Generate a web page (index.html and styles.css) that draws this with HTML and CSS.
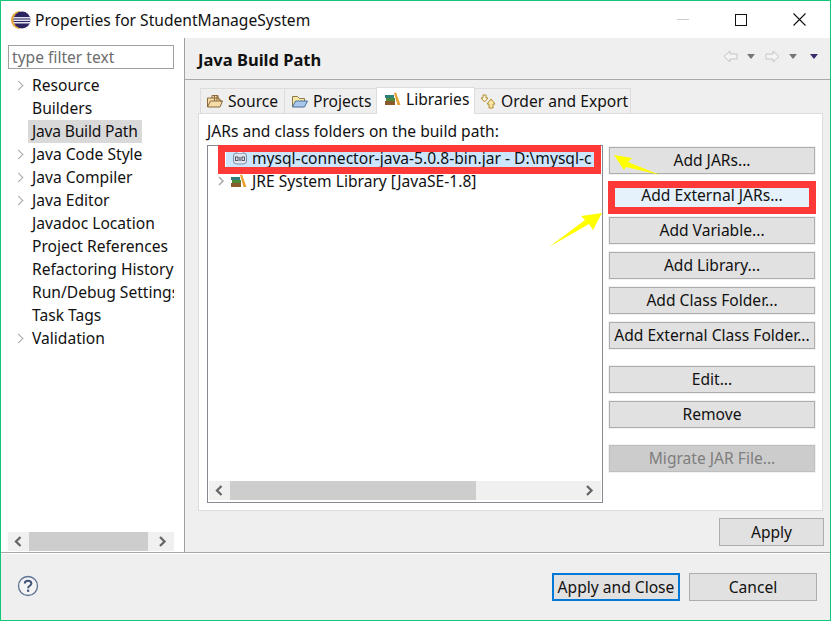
FILE: index.html
```html
<!DOCTYPE html>
<html lang="en">
<head>
  <meta charset="UTF-8" />
  <title>Properties for StudentManageSystem</title>
  <link rel="stylesheet" href="styles.css">
</head>
<body>
  <div class="window">
    <div class="titlebar">
      <svg class="app-icon" width="20" height="20" viewBox="0 0 20 20">
        <path d="M9 1 A9 9 0 0 0 9 19 Z" fill="#e8a23c"/>
        <circle cx="11" cy="10" r="8.500" fill="#2c2562"/>
        <rect x="2.500" y="7" width="17" height="1.500" fill="#e4e4f0"/>
        <rect x="2.500" y="9.500" width="17" height="1.500" fill="#e4e4f0"/>
        <rect x="2.500" y="12" width="17" height="1.500" fill="#e4e4f0"/>
      </svg>
      <span class="title">Properties for StudentManageSystem</span>
      <div class="winbtns">
        <span class="win-min"></span>
        <span class="win-max"></span>
        <svg class="win-close" width="13" height="13" viewBox="0 0 13 13"><path d="M0.500 0.500 L12.500 12.500 M12.500 0.500 L0.500 12.500" stroke="#111" stroke-width="1.100"/></svg>
      </div>
    </div>

    <div class="main">
      <aside class="sidebar">
        <div class="filter">type filter text</div>
        <ul class="nav">
          <li class="arrow">Resource</li>
          <li>Builders</li>
          <li class="current"><span>Java Build Path</span></li>
          <li class="arrow">Java Code Style</li>
          <li class="arrow">Java Compiler</li>
          <li class="arrow">Java Editor</li>
          <li>Javadoc Location</li>
          <li>Project References</li>
          <li>Refactoring History</li>
          <li>Run/Debug Settings</li>
          <li>Task Tags</li>
          <li class="arrow">Validation</li>
        </ul>
        <div class="hscroll side-scroll">
          <svg class="btn-left" width="21" height="19" viewBox="0 0 21 19"><path d="M12.500 5 L8 9.500 L12.500 14" fill="none" stroke="#666" stroke-width="2.300"/></svg>
          <div class="thumb"></div>
          <svg class="btn-right" width="26" height="19" viewBox="0 0 26 19"><path d="M12 5 L16.500 9.500 L12 14" fill="none" stroke="#666" stroke-width="2.300"/></svg>
        </div>
      </aside>

      <section class="content">
        <div class="page-head">
          <h1>Java Build Path</h1>
          <div class="nav-arrows">
            <svg width="15" height="13" viewBox="0 0 15 13"><path d="M7 1 L1 6.500 L7 12 V9 H14 V4 H7 Z" fill="#f4f4f4" stroke="#c4c4c4"/></svg>
            <i class="tri"></i>
            <svg width="15" height="13" viewBox="0 0 15 13"><path d="M8 1 L14 6.500 L8 12 V9 H1 V4 H8 Z" fill="#f4f4f4" stroke="#c4c4c4"/></svg>
            <i class="tri"></i>
            <i class="tri dark"></i>
          </div>
        </div>

        <div class="tabs">
          <div class="tab tab-source">
            <svg width="16" height="14" viewBox="0 0 16 14"><path d="M0.500 13 V4 H5 V1.500 H11 V5 H13 V7 H15.500 L13 13 Z" fill="#f6dca8" stroke="#8a6a3a"/><path d="M7.500 1 V7 M10 1 V7 M5 4 H12 M0.500 13 L3.500 7 H15" stroke="#8a6a3a" fill="none"/></svg>
            Source
          </div>
          <div class="tab tab-projects">
            <svg width="16" height="14" viewBox="0 0 16 14"><path d="M0.500 13 V2.500 H5.500 L7.500 4.500 H12.500 V7" fill="#fbe8a8" stroke="#8a7a4a"/><path d="M0.500 13 L3.500 7 H15.500 L12.500 13 Z" fill="#a9c8ec" stroke="#4a6f9a"/></svg>
            Projects
          </div>
          <div class="tab active">
            <svg width="16" height="14" viewBox="0 0 16 14"><rect x="0" y="3" width="9" height="3" fill="#2f7f7a"/><rect x="1" y="6" width="9" height="3" fill="#4a8a3a"/><rect x="0" y="9" width="10" height="4" fill="#8a5a2a"/><path d="M9 1 L11 0.500 L15.500 13 L12.500 13 Z" fill="#e8a030"/></svg>
            Libraries
          </div>
          <div class="tab tab-order">
            <svg width="16" height="15" viewBox="0 0 16 15"><path d="M3 1 H6 V4 H8 L4.500 8 L1 4 H3 Z" fill="#fff6d8" stroke="#b08a30"/><path d="M11 5 L15 10 H13 V14 H9 V10 H7 Z" fill="#fbe8a8" stroke="#b08a30"/></svg>
            Order and Export
          </div>
        </div>

        <div class="tab-panel">
          <div class="tab-label">JARs and class folders on the build path:</div>
          <div class="panel-body">
            <div class="tree">
              <div class="tree-rows">
                <div class="tree-row selected">
                  <svg width="14" height="14" viewBox="0 0 14 14"><rect x="0.500" y="2" width="13" height="11" rx="3" fill="#dfe6f2" stroke="#7f8ba0"/><rect x="4" y="0.500" width="6" height="2" fill="#eef" stroke="#7f8ba0" stroke-width="0.600"/><rect x="2.500" y="6" width="2.500" height="3.500" fill="none" stroke="#334" stroke-width="0.800"/><rect x="9" y="6" width="2.500" height="3.500" fill="none" stroke="#334" stroke-width="0.800"/><path d="M7 6 V10" stroke="#334"/></svg>
                  <span>mysql-connector-java-5.0.8-bin.jar - D:\mysql-c</span>
                </div>
                <div class="tree-row">
                  <svg class="twisty" width="7" height="10" viewBox="0 0 7 10"><path d="M1 1 L5 5 L1 9" fill="none" stroke="#a8a8a8" stroke-width="1.500"/></svg>
                  <svg width="16" height="14" viewBox="0 0 16 14"><rect x="0" y="3" width="9" height="3" fill="#2f7f7a"/><rect x="1" y="6" width="9" height="3" fill="#4a8a3a"/><rect x="0" y="9" width="10" height="4" fill="#8a5a2a"/><path d="M9 1 L11 0.500 L15.500 13 L12.500 13 Z" fill="#e8a030"/></svg>
                  <span>JRE System Library [JavaSE-1.8]</span>
                </div>
              </div>
              <div class="hscroll tree-scroll">
                <svg class="btn-left" width="21" height="19" viewBox="0 0 21 19"><path d="M12.500 5 L8 9.500 L12.500 14" fill="none" stroke="#666" stroke-width="2.300"/></svg>
                <div class="thumb"></div>
                <svg class="btn-right" width="26" height="19" viewBox="0 0 26 19"><path d="M12 5 L16.500 9.500 L12 14" fill="none" stroke="#666" stroke-width="2.300"/></svg>
              </div>
            </div>
            <div class="buttons">
              <button>Add JARs...</button>
              <button class="hot">Add External JARs...</button>
              <button>Add Variable...</button>
              <button>Add Library...</button>
              <button>Add Class Folder...</button>
              <button>Add External Class Folder...</button>
              <button class="gap">Edit...</button>
              <button>Remove</button>
              <button class="gap off">Migrate JAR File...</button>
            </div>
          </div>
        </div>

        <div class="apply-row"><button class="apply">Apply</button></div>
      </section>
    </div>

    <div class="footer">
      <svg class="help" width="22" height="22" viewBox="0 0 22 22"><circle cx="11" cy="11" r="9.500" fill="#f4f4f4" stroke="#5f7396" stroke-width="1.300"/><path d="M7.800 8.500 C7.800 4.800 14.400 4.800 14.400 8.500 C14.400 10.800 11.100 10.800 11.100 13.200" fill="none" stroke="#3f5478" stroke-width="2"/><rect x="10" y="14.600" width="2.200" height="2.200" fill="#3f5478"/></svg>
      <div class="footer-btns">
        <button class="default">Apply and Close</button>
        <button class="cancel">Cancel</button>
      </div>
    </div>

    <!-- markup on top of the dialog -->
    <div class="redbox row-box"></div>
    <div class="redbox btn-box"></div>
    <svg class="arrows" width="831" height="621" viewBox="0 0 831 621">
      <path d="M614 155 L632 158 L628 162 L660 175 L626 167 L624 170 Z" fill="#ffff00"/>
      <path d="M602 213 L593 230 L589 224 L549 247 L585 220 L581 216 Z" fill="#ffff00"/>
    </svg>
  </div>
</body>
</html>
```

FILE: styles.css
```css
* { box-sizing: border-box; }

html, body { margin: 0; height: 100%; }

body {
  font-family: 'Noto Sans', sans-serif;
  font-size: 15.6px;
  color: #111;
  background: #fff;
}

.window {
  position: relative;
  width: 831px;
  height: 621px;
  border: 1px solid #10c878;
  display: flex;
  flex-direction: column;
  overflow: hidden;
}

.titlebar {
  height: 37px;
  flex: none;
  display: flex;
  align-items: center;
  padding-left: 10px;
  background: #fff;
}

.app-icon { margin-right: 4px; }

.winbtns {
  margin-left: auto;
  display: flex;
  align-items: center;
  padding-right: 24px;
}

.win-min { width: 12px; height: 1px; background: #ccc; margin-right: 46px; }
.win-max { width: 12px; height: 12px; border: 1px solid #111; margin-right: 46px; }

.main { flex: 1; display: flex; min-height: 0; }

.sidebar {
  width: 184px;
  flex: none;
  border-right: 1px solid #a0a0a0;
  padding: 7px 10px 0 7px;
  display: flex;
  flex-direction: column;
  background: #fff;
}

.filter {
  height: 24px;
  border: 1px solid #a0a0a0;
  padding-left: 3px;
  line-height: 22px;
  color: #6d6d6d;
  margin-bottom: 5px;
}

.nav { list-style: none; margin: 0; padding: 0; flex: 1; white-space: nowrap; overflow: hidden; }

.nav li {
  position: relative;
  height: 23px;
  line-height: 23px;
  padding-left: 24px;
}

.nav li.arrow::before {
  content: "";
  position: absolute;
  left: 7px;
  top: 8px;
  width: 6px;
  height: 6px;
  border-top: 1.500px solid #a8a8a8;
  border-right: 1.500px solid #a8a8a8;
  transform: rotate(45deg);
}

.nav li.current { padding-left: 20px; }
.nav li.current span { display: inline-block; padding: 0 4px; background: #d9d9d9; letter-spacing: -0.2px; }

.hscroll { display: flex; height: 19px; background: #f0f0f0; }
.hscroll svg { flex: none; }
.thumb { background: #cdcdcd; }
.side-scroll { flex: none; margin-bottom: 1px; }
.side-scroll .thumb { flex: 1; }

.content {
  flex: 1;
  min-width: 0;
  background: #efefef;
  display: flex;
  flex-direction: column;
}

.page-head {
  height: 42px;
  flex: none;
  border-bottom: 1px solid #a8a8a8;
  display: flex;
  align-items: center;
  padding: 2px 12px 0 13px;
}

h1 { margin: 0; font-size: 16.500px; font-weight: 700; }

.nav-arrows { margin: -6px 0 0 auto; display: flex; align-items: center; gap: 9px; }
.tri { width: 0; height: 0; border: 4.500px solid transparent; border-top: 5px solid #777; border-bottom: 0; margin-right: 1px; }
.tri.dark { border-top-color: #3b2a6a; margin: 0 0 0 3px; }

.tabs {
  display: flex;
  margin: 8px 0 0 15px;
  height: 25px;
  flex: none;
  align-items: flex-end;
  position: relative;
  z-index: 1;
}

.tab {
  height: 25px;
  display: flex;
  align-items: center;
  gap: 5px;
  border: 1px solid #dcdcdc;
  border-bottom: 0;
  white-space: nowrap;
}

.tab-source { width: 85px; padding-left: 6px; margin-right: -1px; }
.tab-projects { width: 93px; padding-left: 7px; margin-right: -1px; }
.tab-order { width: 157px; padding-left: 5px; margin-left: -1px; }

.tab.active {
  width: 99px;
  height: 27px;
  background: #fff;
  padding: 0 0 4px 8px;
  margin-bottom: -1px;
}

.tab-panel {
  margin: 0 7px 0 13px;
  height: 398px;
  flex: none;
  background: #fff;
  border: 1px solid #dcdcdc;
  padding: 6px 7px 0 8px;
}

.tab-label { height: 25px; line-height: 22px; }

.panel-body { display: flex; gap: 6px; }

.tree {
  width: 396px;
  height: 358px;
  flex: none;
  border: 1px solid #868a91;
  display: flex;
  flex-direction: column;
  padding: 0 1px 2px 1px;
}

.tree-rows { flex: 1; overflow: hidden; }

.tree-row {
  height: 23px;
  padding-left: 9px;
  display: flex;
  align-items: center;
  gap: 5px;
  white-space: nowrap;
}

.tree-row .twisty { margin-right: 1px; }

.tree-row.selected {
  background: #cce6ff;
  margin-left: 17px;
  padding-left: 7px;
  width: 368px;
  overflow: hidden;
}

.tree-scroll { flex: none; }
.tree-scroll .thumb { width: 246px; margin-right: auto; }

.buttons { width: 206px; flex: none; display: flex; flex-direction: column; gap: 8px; padding-top: 2px; }
.buttons button { padding-bottom: 2px; }

button {
  font: inherit;
  color: #111;
  height: 27px;
  padding: 0;
  background: #e1e1e1;
  border: 1px solid #adadad;
  box-shadow: 0 0 0 1px #f2f2f2;
  white-space: nowrap;
}

.buttons .hot { background: #e5f1fb; border-color: #e5f1fb; }
.buttons .gap { margin-top: 9px; }
.buttons .off { background: #cccccc; color: #7e7e7e; border-color: #bfbfbf; }

.apply-row { display: flex; justify-content: flex-end; padding: 7px 6px 0 0; }
.apply { width: 105px; height: 28px; box-shadow: none; }

.footer {
  height: 68px;
  flex: none;
  background: #efefef;
  border-top: 1px solid #a8a8a8;
  box-shadow: inset 0 1px 0 #fff;
  display: flex;
  align-items: flex-start;
  padding: 20px 13px 0 16px;
}

.help { margin-top: 2px; }

.footer-btns { margin-left: auto; display: flex; gap: 9px; }
.footer-btns button { height: 28px; box-shadow: none; }
.default { width: 128px; border: 2px solid #0078d7; }
.cancel { width: 128px; }

/* annotations drawn over the screenshot */
.redbox { position: absolute; border: 7px solid #ff3838; }
.row-box { left: 217px; top: 144px; width: 383px; height: 29px; }
.btn-box { left: 607px; top: 180px; width: 208px; height: 33px; }
.arrows { position: absolute; left: -1px; top: -1px; pointer-events: none; }
```
